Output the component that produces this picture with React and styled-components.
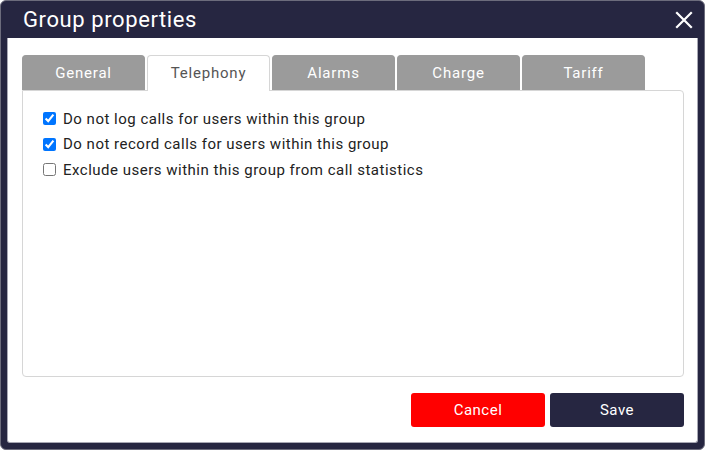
import React, { useState } from "react";
import styled, { createGlobalStyle } from "styled-components";

const GlobalStyle = createGlobalStyle`
  html, body {
    margin: 0;
    padding: 0;
    background: #ffffff;
  }
  body {
    font-family: Roboto, "Liberation Sans", sans-serif;
  }
  * {
    box-sizing: border-box;
  }
`;

const TABS = ["General", "Telephony", "Alarms", "Charge", "Tariff"];

const OPTIONS = [
  { id: "nolog", label: "Do not log calls for users within this group", checked: true },
  { id: "norec", label: "Do not record calls for users within this group", checked: true },
  { id: "nostats", label: "Exclude users within this group from call statistics", checked: false },
];

const App = () => {
  const [active, setActive] = useState("Telephony");
  const [values, setValues] = useState(
    Object.fromEntries(OPTIONS.map((o) => [o.id, o.checked]))
  );

  const toggle = (id) => setValues((v) => ({ ...v, [id]: !v[id] }));

  return (
    <>
      <GlobalStyle />
      <Dialog>
        <TitleBar>
          <Title>Group properties</Title>
          <CloseButton aria-label="Close">
            <svg width="18" height="18" viewBox="0 0 18 18">
              <path
                d="M2 2 L16 16 M16 2 L2 16"
                stroke="#ffffff"
                strokeWidth="2.2"
                strokeLinecap="square"
              />
            </svg>
          </CloseButton>
        </TitleBar>
        <Body>
          <TabList>
            {TABS.map((t) => (
              <Tab key={t} $active={t === active} onClick={() => setActive(t)}>
                {t}
              </Tab>
            ))}
          </TabList>
          <Panel>
            {OPTIONS.map((o) => (
              <OptionRow key={o.id}>
                <Checkbox
                  type="checkbox"
                  checked={values[o.id]}
                  onChange={() => toggle(o.id)}
                />
                {o.label}
              </OptionRow>
            ))}
          </Panel>
          <Footer>
            <ActionButton $variant="cancel">Cancel</ActionButton>
            <ActionButton $variant="save">Save</ActionButton>
          </Footer>
        </Body>
      </Dialog>
    </>
  );
};

const Dialog = styled.div`
  width: 705px;
  height: 450px;
  display: flex;
  flex-direction: column;
  background: #262641;
  border: 1px solid #6c6c7c;
  border-radius: 6px;
  padding: 0 6px 6px 6px;
`;

const TitleBar = styled.div`
  height: 37px;
  display: flex;
  align-items: center;
  justify-content: space-between;
  padding: 0 4px 0 16px;
`;

const Title = styled.h1`
  margin: 0;
  font-size: 22px;
  font-weight: 400;
  color: #ffffff;
  letter-spacing: 0.6px;
`;

const CloseButton = styled.button`
  border: none;
  background: none;
  padding: 0;
  width: 20px;
  height: 20px;
  display: flex;
  align-items: center;
  justify-content: center;
  cursor: pointer;
`;

const Body = styled.div`
  flex: 1;
  background: #ffffff;
  border: 1px solid #a8a8b4;
  border-top: none;
  border-radius: 0 0 3px 3px;
  display: flex;
  flex-direction: column;
  padding: 17px 13px 15px 14px;
`;

const TabList = styled.div`
  display: flex;
  gap: 2px;
`;

const Tab = styled.div`
  width: 123px;
  display: flex;
  align-items: center;
  justify-content: center;
  font-size: 15px;
  letter-spacing: 0.8px;
  border-radius: 4px 4px 0 0;
  cursor: pointer;
  background: ${(p) => (p.$active ? "#ffffff" : "#9b9b9b")};
  color: ${(p) => (p.$active ? "#555555" : "#ffffff")};
  border: 1px solid ${(p) => (p.$active ? "#d6d6d6" : "#9b9b9b")};
  border-bottom: none;
  margin-bottom: ${(p) => (p.$active ? "-1px" : "0")};
  position: relative;
  z-index: ${(p) => (p.$active ? 1 : 0)};
  padding-bottom: ${(p) => (p.$active ? "1px" : "0")};
  height: ${(p) => (p.$active ? "36px" : "35px")};
`;

const Panel = styled.div`
  flex: 1;
  border: 1px solid #d6d6d6;
  border-radius: 0 4px 4px 4px;
  padding: 15px 20px;
`;

const OptionRow = styled.label`
  display: flex;
  align-items: center;
  gap: 7px;
  height: 25.5px;
  font-size: 15px;
  color: #222222;
  letter-spacing: 0.5px;
  cursor: pointer;
`;

const Checkbox = styled.input`
  width: 13px;
  height: 13px;
  margin: 0;
  flex: none;
`;

const Footer = styled.div`
  display: flex;
  justify-content: flex-end;
  gap: 5px;
  margin-top: 16px;
`;

const ActionButton = styled.button`
  width: 134px;
  height: 34px;
  border: none;
  border-radius: 3px;
  font-family: inherit;
  font-size: 15px;
  letter-spacing: 0.5px;
  color: #ffffff;
  cursor: pointer;
  background: ${(p) => (p.$variant === "cancel" ? "#ff0000" : "#262641")};
`;

export default App;
